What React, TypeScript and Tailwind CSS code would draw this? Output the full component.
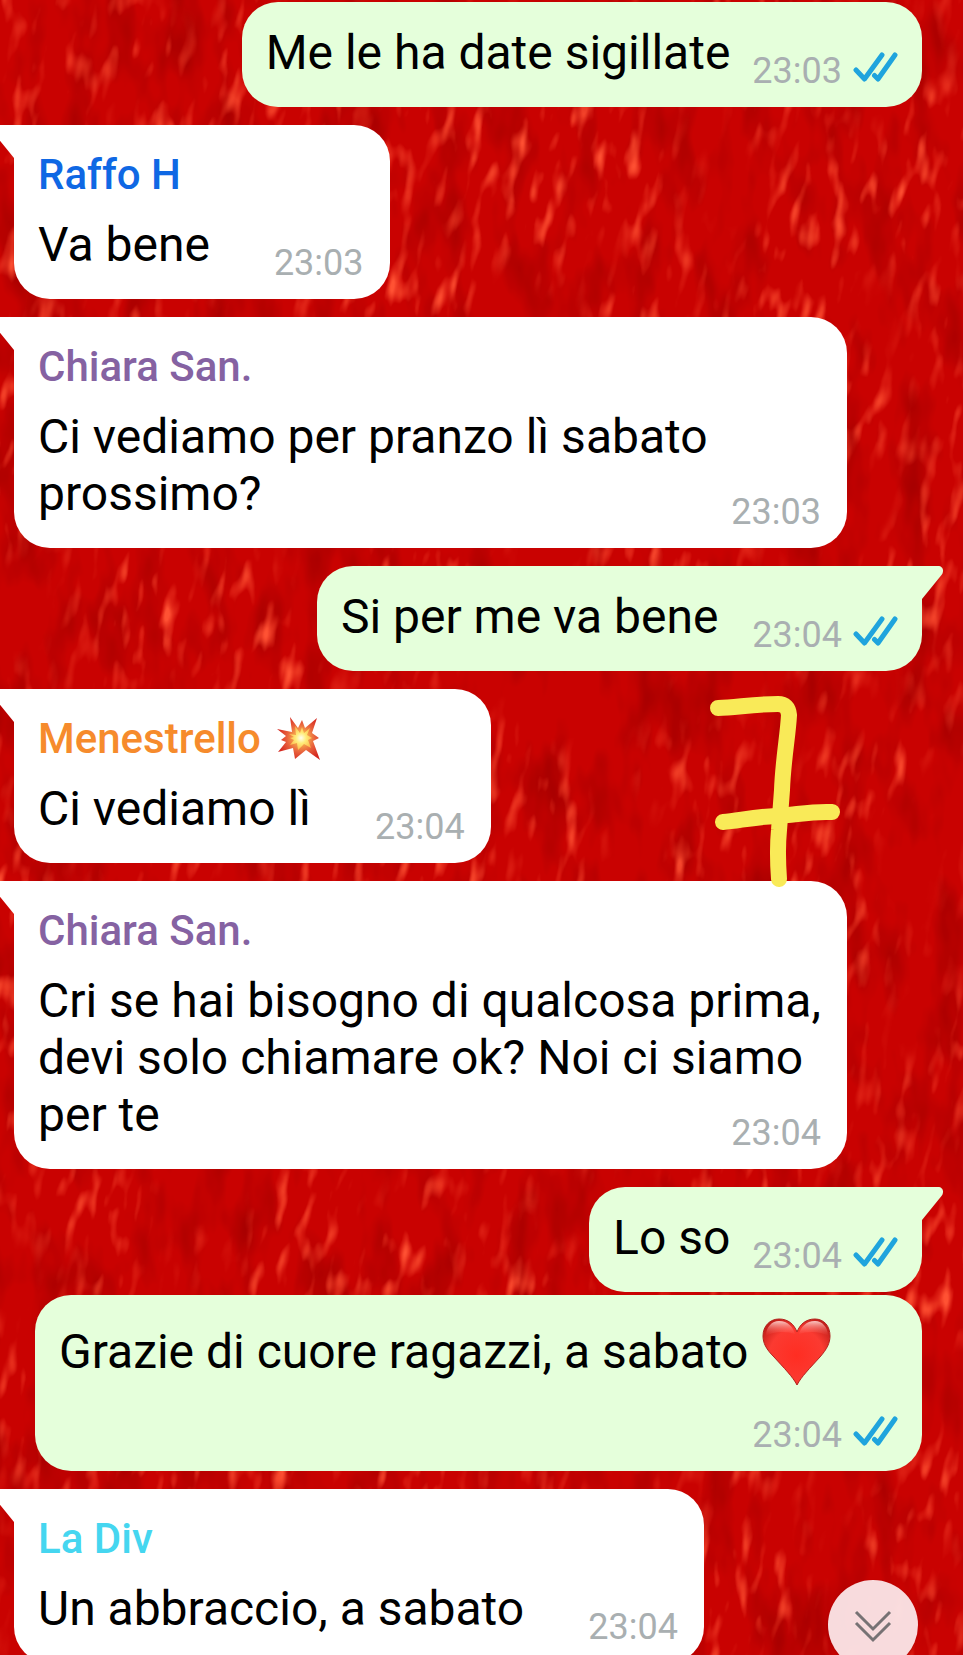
import { ReactNode } from 'react'
import clsx from 'clsx'

interface Message {
  id: number
  own?: boolean
  tail?: boolean
  sender?: string
  senderColor?: string
  badge?: ReactNode
  body: ReactNode
  time: string
  spacing: string
  timeGap: string
}

const MESSAGES: Message[] = [
  { id: 1, own: true, body: 'Me le ha date sigillate', time: '23:03', spacing: 'mt-0.5', timeGap: 'ml-[22px]' },
  { id: 2, tail: true, sender: 'Raffo H', senderColor: 'text-[#0f68e4]', body: 'Va bene', time: '23:03', spacing: 'mt-[18px]', timeGap: 'ml-16' },
  { id: 3, tail: true, sender: 'Chiara San.', senderColor: 'text-[#8562a2]', body: 'Ci vediamo per pranzo lì sabato prossimo?', time: '23:03', spacing: 'mt-[18px]', timeGap: 'ml-16' },
  { id: 4, own: true, tail: true, body: 'Si per me va bene', time: '23:04', spacing: 'mt-[18px]', timeGap: 'ml-[34px]' },
  { id: 5, tail: true, sender: 'Menestrello', senderColor: 'text-[#f68b2c]', badge: <Collision />, body: 'Ci vediamo lì', time: '23:04', spacing: 'mt-[18px]', timeGap: 'ml-16' },
  { id: 6, tail: true, sender: 'Chiara San.', senderColor: 'text-[#8562a2]', body: 'Cri se hai bisogno di qualcosa prima, devi solo chiamare ok? Noi ci siamo per te', time: '23:04', spacing: 'mt-[18px]', timeGap: 'ml-16' },
  { id: 7, own: true, tail: true, body: 'Lo so', time: '23:04', spacing: 'mt-[18px]', timeGap: 'ml-[22px]' },
  { id: 8, own: true, body: <>Grazie di cuore ragazzi, a sabato <Heart /></>, time: '23:04', spacing: 'mt-[3px]', timeGap: 'ml-[22px]' },
  { id: 9, tail: true, sender: 'La Div', senderColor: 'text-[#45d6f0]', body: 'Un abbraccio, a sabato', time: '23:04', spacing: 'mt-[18px]', timeGap: 'ml-16' },
]

function Heart() {
  return (
    <svg role="img" aria-label="❤️" viewBox="0 0 72 71" className="inline-block w-[72px] h-[71px] align-[-20px]">
      <defs>
        <radialGradient id="heartFill" cx="50%" cy="55%" r="62%">
          <stop offset="0" stopColor="#ff2d22" />
          <stop offset="0.65" stopColor="#fb3a31" />
          <stop offset="1" stopColor="#c21f1a" />
        </radialGradient>
        <linearGradient id="heartGloss" x1="0" y1="0" x2="0" y2="1">
          <stop offset="0" stopColor="#ffd9d4" stopOpacity="0.9" />
          <stop offset="1" stopColor="#ff5a50" stopOpacity="0" />
        </linearGradient>
      </defs>
      <path
        d="M37 68C33 60 24 51 14 40C6 32 3 26 3 19C3 9 10 2 19 2C28 2 34 7 37 15C40 7 46 2 55 2C64 2 70 9 70 19C70 26 67 32 60 40C50 51 41 60 37 68Z"
        fill="url(#heartFill)" stroke="#b3211c" strokeWidth="1"
      />
      <path d="M19 4C28 4 33 10 35 17C27 14 13 14 6 19C6 10 12 4 19 4Z" fill="url(#heartGloss)" />
      <path d="M55 4C46 4 41 10 39 17C47 14 61 14 68 19C68 10 62 4 55 4Z" fill="url(#heartGloss)" />
    </svg>
  )
}

function Collision() {
  return (
    <svg role="img" aria-label="💥" viewBox="0 0 43 44" className="w-[43px] h-11">
      <defs>
        <radialGradient id="boomOuter" gradientUnits="userSpaceOnUse" cx="24" cy="21" r="24">
          <stop offset="0.3" stopColor="#f5a04a" />
          <stop offset="0.6" stopColor="#e8603c" />
          <stop offset="1" stopColor="#d4261f" />
        </radialGradient>
        <radialGradient id="boomInner" gradientUnits="userSpaceOnUse" cx="24" cy="21" r="15">
          <stop offset="0" stopColor="#fffef0" />
          <stop offset="0.35" stopColor="#ffec7a" />
          <stop offset="1" stopColor="#fba53c" />
        </radialGradient>
      </defs>
      <path
        d="M13 0L21 11L25 3L28 11L40 1L35 16L42 21L36 24L43 43L29 33L18 42L16 31L1 35L9 25L4 23L9 19L0 12L15 15Z"
        fill="url(#boomOuter)"
      />
      <path
        d="M18 9L23 16L25 10L27 16L33 11L30 18L35 21L31 23L34 31L27 27L21 33L20 26L13 28L17 23L13 21L17 20L12 17L19 18Z"
        fill="url(#boomInner)"
      />
    </svg>
  )
}

function ReadTicks() {
  return (
    <svg
      role="img" aria-label="Letto" viewBox="0 0 45 31" className="w-[45px] h-[31px] mb-2"
      fill="none" stroke="#1fa4dd" strokeWidth="5" strokeLinecap="round" strokeLinejoin="round"
    >
      <path d="M3 18L11.5 27L29 3" />
      <path d="M21.5 23.5L25 27L42 3" />
    </svg>
  )
}

function Tail({ own }: { own?: boolean }) {
  return (
    <svg
      aria-hidden="true" viewBox="0 0 22 33"
      className={clsx(
        'absolute top-0 w-[22px] h-[33px]',
        own ? 'left-full fill-[#e5ffdb]' : 'right-full -scale-x-100 fill-white',
      )}
    >
      <path d="M0 0H16C21 0 22.5 5 19.5 9L0 33Z" />
    </svg>
  )
}

function Bubble({ msg }: { msg: Message }) {
  const { own, tail, sender } = msg
  return (
    <li className={clsx('flex', msg.spacing, own ? 'justify-end pr-[41px]' : 'pl-3.5')}>
      <div
        className={clsx(
          'relative rounded-[36px] pt-[22px] pb-4 px-6',
          own ? 'bg-[#e5ffdb] max-w-[887px]' : 'bg-white max-w-[833px]',
          tail && (own ? 'rounded-tr-none' : 'rounded-tl-none'),
        )}
      >
        {tail && <Tail own={own} />}
        {sender && (
          <div className={clsx('flex items-center gap-4 mb-[13px] text-[42px] leading-[56px] font-medium', msg.senderColor)}>
            {sender}
            {msg.badge}
          </div>
        )}
        <div className="flow-root text-[48px] leading-[57px] text-black">
          {msg.body}
          {/* floats beside the last line, or drops below it when there is no room */}
          <span className={clsx('float-right mt-[27px] flex items-end gap-[11px] text-[36px] leading-[40px] text-[#a9afb1]', msg.timeGap)}>
            <time className={own ? '' : 'pr-0.5'}>{msg.time}</time>
            {own && <ReadTicks />}
          </span>
        </div>
      </div>
    </li>
  )
}

function Wallpaper() {
  return (
    <svg aria-hidden="true" className="absolute inset-0 w-full h-full">
      <filter id="grain" x="0" y="0" width="100%" height="100%" colorInterpolationFilters="sRGB">
        <feTurbulence type="fractalNoise" baseFrequency="0.07 0.025" numOctaves="2" seed="7" />
        <feColorMatrix values="0 0 0 0 1  0 0 0 0 0.32  0 0 0 0 0.2  0 0 0 3.2 -1.75" result="streaks" />
        <feTurbulence type="fractalNoise" baseFrequency="0.009 0.006" numOctaves="2" seed="3" />
        <feColorMatrix values="0 0 0 0 1  0 0 0 0 1  0 0 0 0 1  0 0 0 4 -1.4" result="patches" />
        <feComposite in="streaks" in2="patches" operator="in" />
      </filter>
      <filter id="shade" x="0" y="0" width="100%" height="100%" colorInterpolationFilters="sRGB">
        <feTurbulence type="fractalNoise" baseFrequency="0.03 0.012" numOctaves="3" seed="21" />
        <feColorMatrix values="0 0 0 0 0.66  0 0 0 0 0  0 0 0 0 0  0 0 0 2.4 -1.1" />
      </filter>
      <rect width="100%" height="100%" fill="#c90201" />
      <rect width="100%" height="100%" filter="url(#shade)" />
      <g transform="rotate(9)">
        <rect x="-100" y="-400" width="1700" height="2300" filter="url(#grain)" />
      </g>
    </svg>
  )
}

export default function App() {
  return (
    <main className="relative h-screen overflow-hidden bg-[#c90201] font-['Roboto',sans-serif]">
      <Wallpaper />
      <ul className="relative">
        {MESSAGES.map(msg => <Bubble key={msg.id} msg={msg} />)}
      </ul>

      {/* Marker drawing over the chat */}
      <svg
        aria-hidden="true" viewBox="0 0 130 194"
        className="absolute top-[695px] right-[123px] w-[130px] h-[194px]"
        fill="none" stroke="#f9ea58" strokeWidth="16" strokeLinecap="round" strokeLinejoin="round"
      >
        <path d="M8 13C25 13 42 9 68 9Q78 9 79 20C78 40 73 66 72 95C71 110 70 120 69 135C67 155 68 170 69 184" />
        <path d="M13 127C28 126 42 122 66 121C86 120 100 116 122 117" />
      </svg>

      <button
        aria-label="Vai in fondo"
        className="absolute right-[45px] -bottom-[15px] w-[90px] h-[90px] rounded-full bg-[#fbe7e9]/95 shadow"
      >
        <svg viewBox="0 0 90 90" className="w-full h-full" fill="none" stroke="#777274" strokeWidth="3">
          <path d="M28 32L45 49L62 32" />
          <path d="M28 43L45 60L62 43" />
        </svg>
      </button>
    </main>
  )
}
